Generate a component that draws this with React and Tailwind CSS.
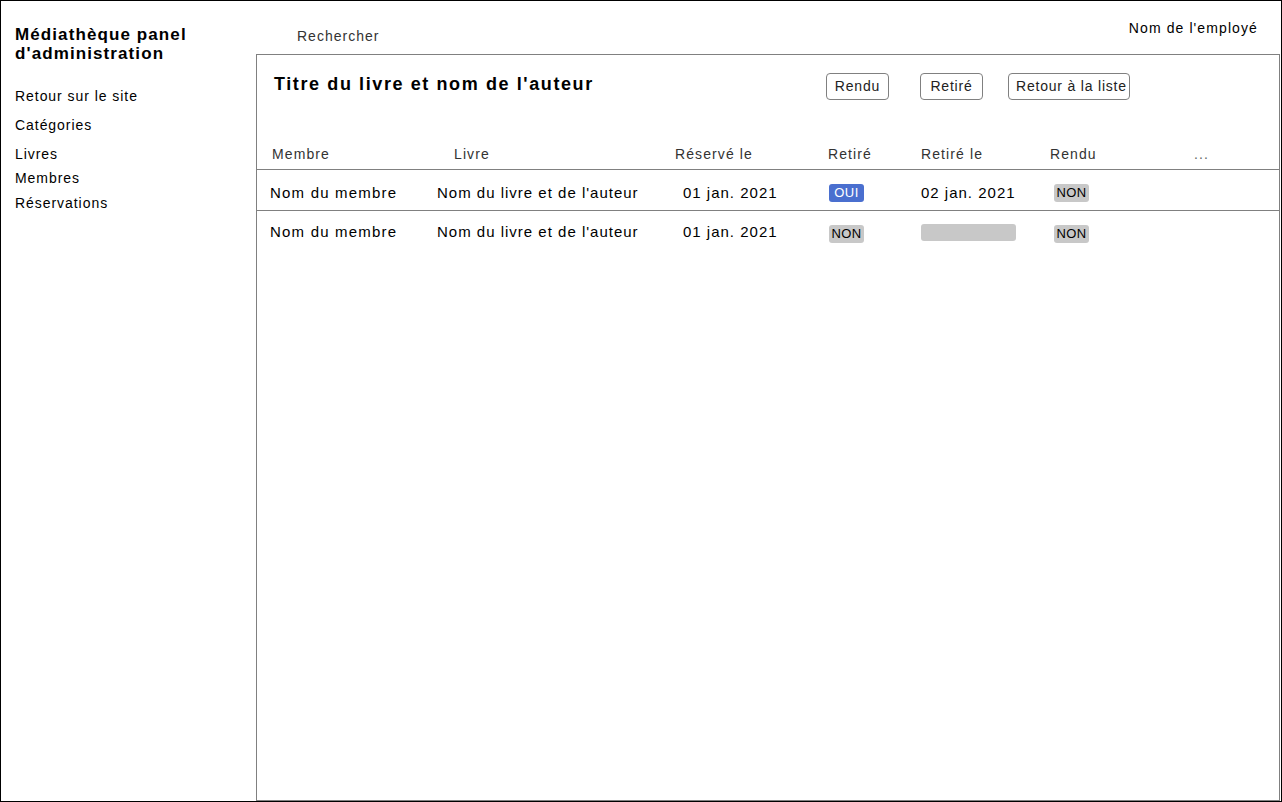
import React from "react";

const navItems = [
  { label: "Retour sur le site", cls: "mt-[24px]" },
  { label: "Catégories", cls: "mt-[11px]" },
  { label: "Livres", cls: "mt-[11px]" },
  { label: "Membres", cls: "mt-[6px]" },
  { label: "Réservations", cls: "mt-[7px]" },
];

const Badge = ({ yes }) => (
  <span
    className={
      "inline-flex items-center justify-center w-[35px] h-[18px] rounded-[3px] text-[13px] tracking-[0.4px] " +
      (yes ? "bg-[#4a6fcf] text-white" : "bg-[#c8c8c8] text-black")
    }
  >
    {yes ? "OUI" : "NON"}
  </span>
);

const Row = ({ retire, retireLe, last }) => (
  <div
    className={
      "flex items-start h-[41px] text-[15px] leading-[18px] text-black tracking-[1px] " +
      (last ? "pt-[12px]" : "pt-[14px] border-b border-[#808080]")
    }
  >
    <div className="w-[180px] pl-[13px] tracking-[1.2px]">Nom du membre</div>
    <div className="w-[246px]">Nom du livre et de l'auteur</div>
    <div className="w-[145px]">01 jan. 2021</div>
    <div className={"w-[93px] pl-[1px] " + (last ? "mt-[1px]" : "-mt-[1px]")}>
      <Badge yes={retire} />
    </div>
    <div className="w-[133px]">
      {retireLe ? (
        <span>{retireLe}</span>
      ) : (
        <div className="w-[95px] h-[17px] mt-[1px] rounded-[3px] bg-[#c8c8c8]" />
      )}
    </div>
    <div className={last ? "mt-[1px]" : "-mt-[1px]"}>
      <Badge yes={false} />
    </div>
  </div>
);

const Btn = ({ children, w }) => (
  <button className={"h-[27px] rounded-[4px] border border-[#808080] text-[14px] text-[#222] whitespace-nowrap overflow-hidden tracking-[0.8px] " + w}>
    {children}
  </button>
);

export default function App() {
  return (
    <div
      className="w-[1282px] h-[802px] border border-black flex bg-white text-black"
      style={{ fontFamily: "'Liberation Sans', Arial, sans-serif" }}
    >
      <aside className="w-[255px] shrink-0 pl-[14px] pt-[24px]">
        <h1 className="text-[17px] font-bold leading-[19px] tracking-[1.1px]">
          Médiathèque panel
          <br />
          d'administration
        </h1>
        <nav className="flex flex-col text-[14px] leading-[18px] tracking-[0.95px]">
          {navItems.map(n => (
            <a key={n.label} className={n.cls}>{n.label}</a>
          ))}
        </nav>
      </aside>

      <div className="flex-1 flex flex-col min-w-0">
        <header className="h-[53px] shrink-0 flex items-start text-[14px]">
          <span className="ml-[41px] mt-[25px] text-[#333] tracking-[1px]">Rechercher</span>
          <span className="ml-auto mr-[23px] mt-[17px] tracking-[1.1px]">Nom de l'employé</span>
        </header>

        <main className="flex-1 border border-[#808080] mr-[1px]">
          <div className="flex items-start h-[91px]">
            <h2 className="ml-[17px] mt-[16px] text-[18px] font-bold tracking-[1.6px]">
              Titre du livre et nom de l'auteur
            </h2>
            <div className="ml-auto mr-[149px] mt-[18px] flex gap-[31px]">
              <Btn w="w-[63px]">Rendu</Btn>
              <Btn w="w-[63px]">Retiré</Btn>
              <Btn w="w-[122px] -ml-[6px] pl-[7px] text-left">Retour à la liste</Btn>
            </div>
          </div>
          <div className="flex items-start h-[24px] border-b border-[#808080] text-[14px] leading-[16px] text-[#333] tracking-[1.1px]">
            <div className="w-[197px] pl-[15px]">Membre</div>
            <div className="w-[221px]">Livre</div>
            <div className="w-[153px]">Réservé le</div>
            <div className="w-[93px]">Retiré</div>
            <div className="w-[129px]">Retiré le</div>
            <div className="w-[144px]">Rendu</div>
            <div className="text-[#666]">...</div>
          </div>
          <Row retire={true} retireLe="02 jan. 2021" />
          <Row retire={false} retireLe={null} last />
        </main>
      </div>
    </div>
  );
}
